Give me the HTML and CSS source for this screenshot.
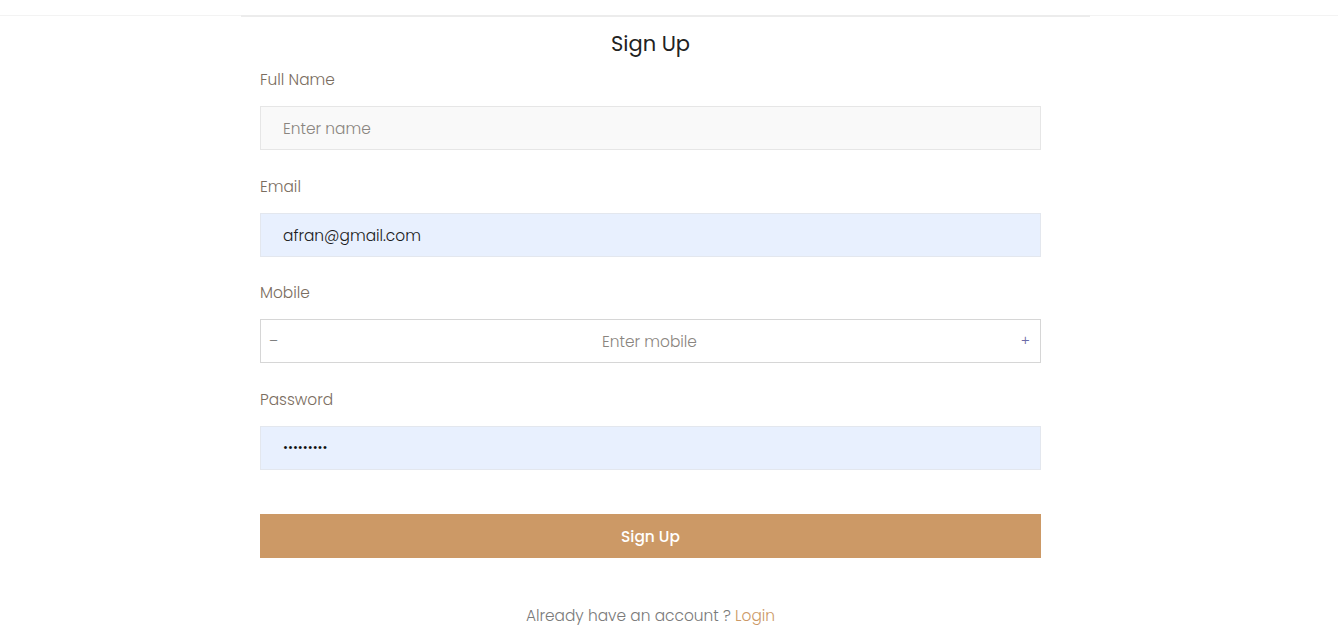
FILE: index.html
```html
<!DOCTYPE html>
<html>
<head>
<meta charset="utf-8">
<link rel="stylesheet" href="styles.css">
</head>
<body>
<div class="topbar"></div>
<main class="page">
  <div class="rule"></div>
  <form class="signup">
    <h1 class="title">Sign Up</h1>
    <div class="field">
      <label class="label">Full Name</label>
      <div class="input input-plain"><span class="placeholder">Enter name</span></div>
    </div>
    <div class="field">
      <label class="label">Email</label>
      <div class="input input-filled"><span class="value">afran@gmail.com</span></div>
    </div>
    <div class="field">
      <label class="label">Mobile</label>
      <div class="input input-mobile">
        <span class="step">&#8211;</span>
        <span class="placeholder center">Enter mobile</span>
        <span class="step plus">+</span>
      </div>
    </div>
    <div class="field">
      <label class="label">Password</label>
      <div class="input input-filled"><span class="dots">&#8226;&#8226;&#8226;&#8226;&#8226;&#8226;&#8226;&#8226;&#8226;</span></div>
    </div>
    <button type="button" class="submit">Sign Up</button>
    <p class="footer">Already have an account ? <a class="login">Login</a></p>
  </form>
</main>
</body>
</html>
```

FILE: styles.css
```css
* { box-sizing: border-box; }
html, body { margin: 0; padding: 0; background: #fff; }
body {
  font-family: Poppins, "Open Sans", "Liberation Sans", sans-serif;
  font-weight: 300;
  color: #777;
}
.topbar {
  height: 16px;
  border-bottom: 1px solid #f3f3f3;
}
.page {
  margin-left: 241px;
  width: 849px;
  margin-top: -1px;
}
.rule {
  height: 2px;
  background: #ececec;
}
.signup {
  width: 781px;
  margin-left: 19px;
  display: flex;
  flex-direction: column;
}
.title {
  margin: 12px 0 0;
  font-size: 21px;
  line-height: 30px;
  font-weight: 400;
  color: #222;
  text-align: center;
}
.field {
  display: flex;
  flex-direction: column;
  margin-top: 9px;
}
.field + .field { margin-top: 24.67px; }
.label {
  font-size: 15.4px;
  line-height: 24px;
  color: #7a6d60;
  margin-bottom: 14px;
}
.input {
  height: 44px;
  border: 1px solid #e6e6e6;
  display: flex;
  align-items: center;
  padding-left: 22px;
  font-size: 15.4px;
}
.input-plain { background: #f9f9f9; }
.input-filled { background: #e8f0fe; border-color: #e3e7ee; padding-top: 1px; }
.placeholder { color: #8a8580; }
.value { color: #1a1a1a; font-weight: 300; }
.dots { color: #111; font-size: 12px; font-weight: 400; }
.input-mobile {
  background: #fff;
  border-color: #d6d6d6;
  padding: 0 10px 0 8px;
  justify-content: space-between;
}
.step { color: #777; font-size: 14px; }
.plus { color: #6b6ba8; }
.center { flex: 1; text-align: center; }
.submit {
  margin-top: 44px;
  height: 44px;
  padding: 1px 0 0;
  border: 0;
  background: #cc9966;
  color: #fff;
  font-family: inherit;
  font-size: 15.4px;
  font-weight: 500;
}
.footer {
  margin: 47px 0 0;
  text-align: center;
  font-size: 15.4px;
  line-height: 22px;
  color: #7a7a7a;
}
.login { color: #cc9966; }
```
